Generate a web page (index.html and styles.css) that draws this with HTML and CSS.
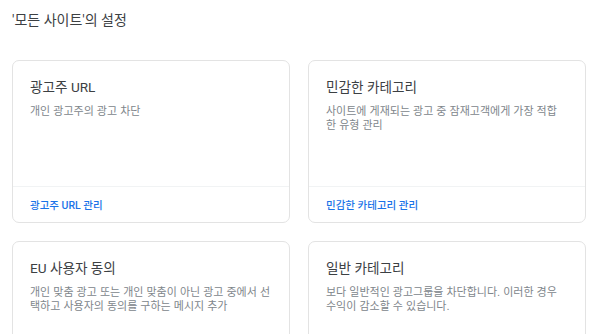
FILE: index.html
```html
<!DOCTYPE html>
<html lang="ko">
<head>
  <meta charset="UTF-8" />
  <meta name="viewport" content="width=device-width, initial-scale=1.0"/>
  <title>'모든 사이트'의 설정</title>
  <link rel="stylesheet" href="styles.css">
</head>
<body>
  <div class="page">
    <h1 class="page-title">'모든 사이트'의 설정</h1>

    <div class="card-grid">
      <div class="card">
        <div class="card-body">
          <h2 class="card-title">광고주 URL</h2>
          <p class="card-desc">개인 광고주의 광고 차단</p>
        </div>
        <div class="card-footer"><a class="card-link" href="#">광고주 URL 관리</a></div>
      </div>

      <div class="card">
        <div class="card-body">
          <h2 class="card-title">민감한 카테고리</h2>
          <p class="card-desc">사이트에 게재되는 광고 중 잠재고객에게 가장 적합한 유형 관리</p>
        </div>
        <div class="card-footer"><a class="card-link" href="#">민감한 카테고리 관리</a></div>
      </div>

      <div class="card">
        <div class="card-body">
          <h2 class="card-title">EU 사용자 동의</h2>
          <p class="card-desc">개인 맞춤 광고 또는 개인 맞춤이 아닌 광고 중에서 선택하고 사용자의 동의를 구하는 메시지 추가</p>
        </div>
        <div class="card-footer"><a class="card-link" href="#">EU 사용자 동의 관리</a></div>
      </div>

      <div class="card">
        <div class="card-body">
          <h2 class="card-title">일반 카테고리</h2>
          <p class="card-desc">보다 일반적인 광고그룹을 차단합니다. 이러한 경우 수익이 감소할 수 있습니다.</p>
        </div>
        <div class="card-footer"><a class="card-link" href="#">일반 카테고리 관리</a></div>
      </div>
    </div>
  </div>
</body>
</html>
```

FILE: styles.css
```css
* { margin: 0; padding: 0; box-sizing: border-box; }
body {
  font-family: Roboto, "Noto Sans CJK KR", sans-serif;
  background: #fff;
  color: #3c4043;
  overflow: hidden;
}

.page { padding: 10px 15px 0 12px; }

.page-title {
  font-size: 14px;
  font-weight: 400;
  color: #3c4043;
  line-height: 20px;
}

.card-grid {
  display: grid;
  grid-template-columns: 278px 278px;
  column-gap: 18px;
  row-gap: 18px;
  margin-top: 30px;
}

.card {
  border: 1px solid #e3e3e3;
  border-radius: 7px;
  height: 163px;
  display: flex;
  flex-direction: column;
}

.card-body {
  flex: 1;
  padding: 16px 18.5px 0 17px;
}

.card-title {
  font-size: 13.6px;
  font-weight: 400;
  color: #3c4043;
  line-height: 20px;
}

.card-desc {
  margin-top: 7px;
  font-family: "Liberation Sans", "Noto Sans CJK KR", sans-serif;
  font-size: 11px;
  line-height: 14px;
  color: #80868b;
}

.card-footer {
  border-top: 1.5px solid #f1f3f4;
  height: 36px;
  padding: 0 17px 1px;
  display: flex;
  align-items: center;
}

.card-link {
  font-size: 10.5px;
  color: #1a73e8;
  text-decoration: none;
  font-weight: 500;
}
```
